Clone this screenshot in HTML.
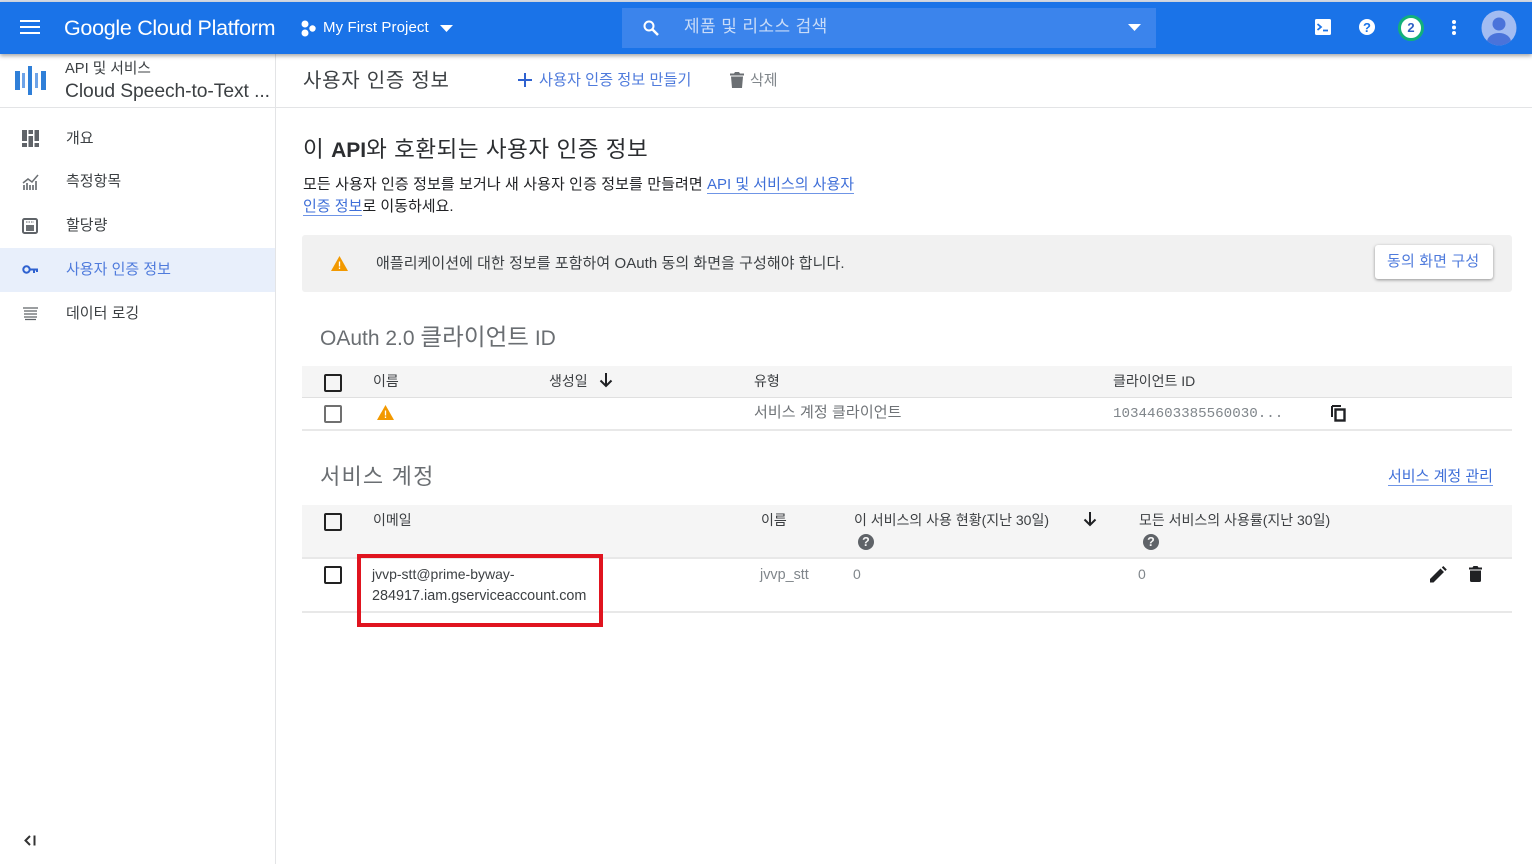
<!DOCTYPE html>
<html lang="ko"><head><meta charset="utf-8"><title>사용자 인증 정보</title>
<style>
html,body{margin:0;padding:0;width:1532px;height:864px;overflow:hidden;background:#fff;font-family:"Liberation Sans","Noto Sans CJK KR",sans-serif;color:#202124}
#w{position:absolute;left:0;top:0;width:1532px;height:864px;overflow:hidden;filter:blur(.3px)}
.t{position:absolute;white-space:nowrap;line-height:1}
.b{position:absolute}
svg{position:absolute;overflow:visible}
a{color:#3f6fd8;text-decoration:none;border-bottom:1px solid #6f95e6}
.g{color:#5f6368}
.h{font-size:14px;color:#3c3f42}
.cb{position:absolute;width:14px;height:14px;border:2px solid #222;border-radius:2px}
</style></head><body><div id="w">
<div class="b" style="left:0;top:0;width:1532px;height:2px;background:#d5dbe6"></div>
<div class="b" style="left:0;top:2px;width:1532px;height:52px;background:#1a73e8;box-shadow:0 2px 4px rgba(0,0,0,.35);z-index:2"></div>
<div style="position:absolute;left:0;top:0;width:1532px;height:60px;z-index:3">
<div class="b" style="left:20px;top:20px;width:20px;height:2px;background:#fff;box-shadow:0 6px 0 #fff,0 12px 0 #fff"></div>
<div class="t" style="left:64px;top:18px;font-size:21.5px;color:#fff;letter-spacing:-.3px">Google Cloud Platform</div>
<svg style="left:300px;top:20px" width="16" height="17"><circle cx="5" cy="4" r="3.5" fill="#fff"/><circle cx="5" cy="13" r="3.5" fill="#fff"/><circle cx="12.500" cy="8.500" r="3.200" fill="#fff"/></svg>
<div class="t" style="left:323px;top:20px;font-size:15px;color:#fff;letter-spacing:.1px">My First Project</div>
<svg style="left:440px;top:25px" width="14" height="8"><path d="M0 0h13L6.500 7z" fill="#fff"/></svg>
<div class="b" style="left:622px;top:8px;width:534px;height:40px;background:#3b84ec"></div>
<svg style="left:642px;top:19px" width="18" height="18" viewBox="0 0 18 18"><circle cx="7" cy="7" r="4.500" fill="none" stroke="#fff" stroke-width="2"/><path d="M10.500 10.500L16 16" stroke="#fff" stroke-width="2.500"/></svg>
<div class="t" style="left:684px;top:18px;font-size:17px;color:#c9dcf8;letter-spacing:.4px">제품 및 리소스 검색</div>
<svg style="left:1128px;top:24px" width="14" height="8"><path d="M0 0h13L6.500 7z" fill="#fff"/></svg>
<svg style="left:1315px;top:19px" width="17" height="17"><rect width="16" height="16" rx="1.500" fill="#fff"/><path d="M2.500 5L6 8 2.500 11" fill="none" stroke="#1a73e8" stroke-width="1.800"/><path d="M8 11.500h5" stroke="#1a73e8" stroke-width="1.800"/></svg>
<div class="b" style="left:1359px;top:19px;width:16px;height:16px;border-radius:50%;background:#fff"></div>
<div class="t" style="left:1359px;top:21px;width:16px;text-align:center;font-size:13px;font-weight:700;color:#1a73e8">?</div>
<div class="b" style="left:1398px;top:15px;width:20px;height:20px;border-radius:50%;background:#fff;border:3px solid #12b07a"></div>
<div class="t" style="left:1398px;top:21px;width:26px;text-align:center;font-size:13px;font-weight:700;color:#2f5fc4">2</div>
<svg style="left:1451px;top:19px" width="6" height="17"><circle cx="3" cy="3" r="2" fill="#fff"/><circle cx="3" cy="8.500" r="2" fill="#fff"/><circle cx="3" cy="14" r="2" fill="#fff"/></svg>
<svg style="left:1481px;top:10px" width="36" height="36" viewBox="0 0 36 36"><defs><clipPath id="c"><circle cx="18" cy="18" r="17.500"/></clipPath></defs><circle cx="18" cy="18" r="17.500" fill="#a2bcf2"/><g clip-path="url(#c)" fill="#4a73da"><circle cx="18" cy="14" r="6.500"/><ellipse cx="18" cy="32" rx="12" ry="9"/></g></svg>
</div>

<!-- sidebar -->
<div class="b" style="left:275px;top:54px;width:1px;height:810px;background:#e3e4e6"></div>
<div class="b" style="left:0;top:107px;width:1532px;height:1px;background:#e3e4e6"></div>
<svg style="left:14px;top:66px" width="33" height="30" fill="#2f7fd8"><rect x="1" y="5" width="5" height="19"/><rect x="8" y="7" width="3" height="15" fill="#6fa4e8"/><rect x="14" y="0" width="4" height="29"/><rect x="21" y="7" width="3" height="15" fill="#6fa4e8"/><rect x="27" y="5" width="5" height="19"/></svg>
<div class="t" style="left:65px;top:62px;font-size:14.700px;color:#3c4043">API 및 서비스</div>
<div class="t" style="left:65px;top:82px;font-size:19.300px;color:#3c4043;letter-spacing:-.08px">Cloud Speech-to-Text ...</div>

<svg style="left:22px;top:130px" width="17" height="17" fill="#5f6368"><rect width="5" height="11"/><rect y="13" width="5" height="4"/><rect x="6.500" width="4.500" height="4"/><rect x="6.500" y="6" width="4.500" height="11"/><rect x="12.500" width="4.500" height="11"/><rect x="12.500" y="13" width="4.500" height="4"/></svg>
<div class="t" style="left:66px;top:131px;font-size:15px;color:#3c4043">개요</div>
<svg style="left:22px;top:174px" width="17" height="17" fill="none" stroke="#6b6f73"><path d="M1 9L6 5l4 3 6-7" stroke-width="1.500"/><path d="M2 16v-5M5 16V9M8 16v-5M11 16v-5M14 16V7" stroke-width="1.700"/></svg>
<div class="t" style="left:66px;top:174px;font-size:15px;color:#3c4043">측정항목</div>
<svg style="left:22px;top:218px" width="17" height="17"><rect x="1" y="1" width="14" height="14" rx="1.500" fill="none" stroke="#5f6368" stroke-width="2"/><rect x="4" y="7" width="8" height="6" fill="#6b6f73"/><path d="M4 4h8" stroke="#5f6368" stroke-dasharray="1.500 1"/></svg>
<div class="t" style="left:66px;top:218px;font-size:15px;color:#3c4043">할당량</div>
<div class="b" style="left:0;top:248px;width:275px;height:44px;background:#e8effb"></div>
<svg style="left:22px;top:265px" width="17" height="10"><circle cx="4.500" cy="4.500" r="3.200" fill="none" stroke="#2f62d0" stroke-width="2"/><path d="M8 4.500h8M12 4.500V8M15 4.500V7" stroke="#2f62d0" stroke-width="2"/></svg>
<div class="t" style="left:66px;top:262px;font-size:15px;color:#4f7bdc">사용자 인증 정보</div>
<svg style="left:23px;top:307px" width="16" height="13" stroke="#5f6368" stroke-width="1.300"><path d="M0 1h15M1 4h13M1 7h13M1 10h13M2 12.500h11"/></svg>
<div class="t" style="left:66px;top:306px;font-size:15px;color:#3c4043">데이터 로깅</div>
<svg style="left:24px;top:835px" width="12" height="11" fill="none" stroke="#333" stroke-width="2"><path d="M6 1L1.500 5.500 6 10M10.500 0.500v10"/></svg>

<!-- action bar -->
<div class="t" style="left:303px;top:71px;font-size:20px;color:#3c4043;letter-spacing:.75px">사용자 인증 정보</div>
<svg style="left:518px;top:73px" width="14" height="14"><path d="M7 0v14M0 7h14" stroke="#2f62d0" stroke-width="2"/></svg>
<div class="t" style="left:539px;top:73px;font-size:15.200px;color:#4f7bdc">사용자 인증 정보 만들기</div>
<svg style="left:730px;top:72px" width="14" height="16" fill="#6b6f73"><path d="M5 0h4l1 1.500h4V3.500H0V1.500h4zM1 4.500h12L12 16H2z"/></svg>
<div class="t" style="left:750px;top:73px;font-size:15px;color:#80868b">삭제</div>

<!-- content -->
<div class="t" style="left:303px;top:139px;font-size:22.500px;color:#2b2d30;letter-spacing:.55px">이 <span style="font-weight:700;font-size:21px;letter-spacing:0">API</span>와 호환되는 사용자 인증 정보</div>
<div class="t" style="left:303px;top:177px;font-size:15px;color:#202124"><span style="letter-spacing:.1px">모든 사용자 인증 정보를 보거나 새 사용자 인증 정보를 만들려면</span> <a href="#">API 및 서비스의 사용자</a></div>
<div class="t" style="left:303px;top:199px;font-size:15px;color:#202124"><a href="#">인증 정보</a>로 이동하세요.</div>

<div class="b" style="left:302px;top:235px;width:1210px;height:57px;background:#f1f1f1;border-radius:3px"></div>
<svg style="left:331px;top:256px" width="17" height="15" viewBox="0 0 17 15"><path d="M8.500 0L17 15H0z" fill="#f29900"/><path d="M8.500 5.500v5M8.500 11.500v1.500" stroke="#fff" stroke-width="1.300"/></svg>
<div class="t" style="left:376px;top:256px;font-size:15px;color:#3c4043;letter-spacing:.05px">애플리케이션에 대한 정보를 포함하여 OAuth 동의 화면을 구성해야 합니다.</div>
<div class="b" style="left:1375px;top:245px;width:118px;height:34px;background:#fff;border-radius:3px;box-shadow:0 1px 3px rgba(0,0,0,.4)"></div>
<div class="t" style="left:1387px;top:254px;font-size:15px;color:#4f7bdc;letter-spacing:.15px">동의 화면 구성</div>

<div class="t g" style="left:320px;top:326px;font-size:21px;color:#6a6e72">OAuth 2.0 <span style="font-size:23.500px;letter-spacing:.1px">클라이언트</span> ID</div>

<!-- table 1 -->
<div class="b" style="left:302px;top:366px;width:1210px;height:31px;background:#f5f5f5;border-bottom:1px solid #e0e0e0"></div>
<div class="cb" style="left:324px;top:374px"></div>
<div class="t h" style="left:373px;top:374px">이름</div>
<div class="t h" style="left:549px;top:374px">생성일</div>
<svg style="left:599px;top:373px" width="14" height="15" fill="none" stroke="#202124" stroke-width="2"><path d="M7 0v13M1.500 7.500L7 13l5.500-5.500"/></svg>
<div class="t h" style="left:754px;top:374px">유형</div>
<div class="t h" style="left:1113px;top:374px">클라이언트 ID</div>
<div class="b" style="left:302px;top:429px;width:1210px;height:2px;background:#e8e8e8"></div>
<div class="cb" style="left:324px;top:405px;border-color:#707070"></div>
<svg style="left:377px;top:405px" width="17" height="15" viewBox="0 0 17 15"><path d="M8.500 0L17 15H0z" fill="#f29900"/><path d="M8.500 5.500v5M8.500 11.500v1.500" stroke="#fff" stroke-width="1.300"/></svg>
<div class="t" style="left:754px;top:405px;font-size:15px;color:#6f7377;letter-spacing:.1px">서비스 계정 클라이언트</div>
<div class="t" style="left:1113px;top:407px;font-size:14.200px;font-family:'Liberation Mono',monospace;color:#80868b">10344603385560030...</div>
<svg style="left:1331px;top:405px" width="15" height="17" fill="none" stroke="#202124" stroke-width="2"><path d="M1 1v11"/><path d="M1 1h9" /><rect x="4.500" y="4.500" width="9" height="11" stroke-width="2.400"/></svg>

<!-- table 2 -->
<div class="t g" style="left:320px;top:466px;font-size:22px;color:#6a6e72;letter-spacing:1.200px">서비스 계정</div>
<div class="t" style="left:1388px;top:469px;font-size:15px"><a href="#">서비스 계정 관리</a></div>
<div class="b" style="left:302px;top:505px;width:1210px;height:52px;background:#f5f5f5;border-bottom:2px solid #e8e8e8"></div>
<div class="cb" style="left:324px;top:513px"></div>
<div class="t h" style="left:373px;top:513px">이메일</div>
<div class="t h" style="left:761px;top:513px">이름</div>
<div class="t h" style="left:854px;top:513px">이 서비스의 사용 현황(지난 30일)</div>
<svg style="left:1083px;top:512px" width="14" height="15" fill="none" stroke="#202124" stroke-width="2"><path d="M7 0v13M1.500 7.500L7 13l5.500-5.500"/></svg>
<div class="t h" style="left:1139px;top:513px">모든 서비스의 사용률(지난 30일)</div>
<div class="b" style="left:858px;top:534px;width:16px;height:16px;border-radius:50%;background:#5f6368"></div>
<div class="t" style="left:858px;top:536px;width:16px;text-align:center;font-size:12.500px;font-weight:700;color:#f5f5f5">?</div>
<div class="b" style="left:1143px;top:534px;width:16px;height:16px;border-radius:50%;background:#5f6368"></div>
<div class="t" style="left:1143px;top:536px;width:16px;text-align:center;font-size:12.500px;font-weight:700;color:#f5f5f5">?</div>

<div class="cb" style="left:324px;top:566px"></div>
<div class="t" style="left:372px;top:567px;font-size:14px;color:#3c4043">jvvp-stt@prime-byway-</div>
<div class="t" style="left:372px;top:589px;font-size:14.400px;color:#3c4043">284917.iam.gserviceaccount.com</div>
<div class="t" style="left:760px;top:568px;font-size:14.400px;color:#80868b">jvvp_stt</div>
<div class="t" style="left:853px;top:567px;font-size:14px;color:#80868b">0</div>
<div class="t" style="left:1138px;top:567px;font-size:14px;color:#80868b">0</div>
<svg style="left:1430px;top:566px" width="17" height="17" fill="#202124"><path d="M0 16.500V13L10.500 2.500l3.500 3.500L3.500 16.500zM11.800 1.500L13.300 0l3.500 3.500-1.500 1.500z"/></svg>
<svg style="left:1469px;top:566px" width="13" height="16" fill="#202124"><path d="M4.500 0h4l1 1.500H13v2H0v-2h3.500zM1 4.500h11V14.500a1.500 1.500 0 0 1-1.500 1.500h-8A1.500 1.500 0 0 1 1 14.500z"/></svg>
<div class="b" style="left:302px;top:611px;width:1210px;height:2px;background:#e8e8e8"></div>
<div class="b" style="left:357px;top:554px;width:238px;height:65px;border:4px solid #e0141f"></div>
</div></body></html>
